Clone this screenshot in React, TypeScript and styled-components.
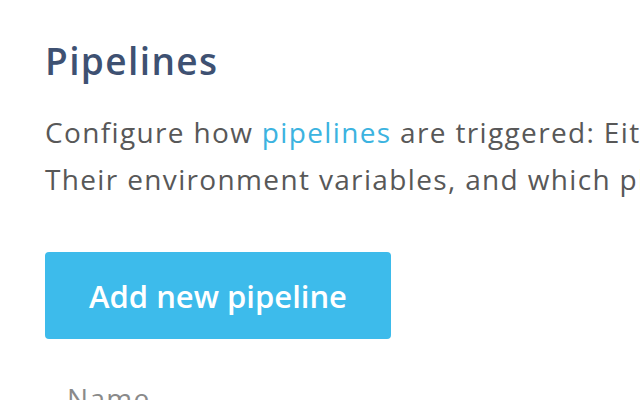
import styled, { createGlobalStyle } from "styled-components";

const GlobalStyle = createGlobalStyle`
    html, body {
        margin: 0;
        padding: 0;
        background: #ffffff;
        overflow: hidden;
    }
    body {
        font-family: "Open Sans", "Noto Sans", sans-serif;
    }
`

const Page = styled.div`
    width: 640px;
    height: 400px;
    padding: 36px 0 0 45px;
    box-sizing: border-box;
    overflow: hidden;
`

const Title = styled.h1`
    margin: 0;
    font-size: 37px;
    font-weight: 600;
    line-height: 50px;
    letter-spacing: 1.4px;
    color: #3e5172;
`

const Intro = styled.p`
    margin: 23px 0 0;
    font-size: 28px;
    line-height: 47px;
    letter-spacing: 1.35px;
    color: #585858;
    white-space: nowrap;
`

const Link = styled.a`
    color: #3cb3e0;
    text-decoration: none;
`

const AddButton = styled.button`
    display: block;
    margin-top: 49px;
    width: 346px;
    height: 87px;
    padding: 0;
    border: none;
    border-radius: 4px;
    background: #3dbbeb;
    color: #ffffff;
    font-family: inherit;
    font-size: 31px;
    font-weight: 600;
    cursor: pointer;
`

const Table = styled.div`
    margin-top: 40px;
    padding-left: 22px;
`

const HeaderCell = styled.div`
    font-size: 28px;
    line-height: 38px;
    letter-spacing: 1.35px;
    color: #8a8a8a;
`

export default function App() {
    return (
        <Page>
            <GlobalStyle />
            <Title>Pipelines</Title>
            <Intro>
                Configure how <Link href="#">pipelines</Link> are triggered: Either manually or on a schedule.
                <br />
                Their environment variables, and which plugins they run.
            </Intro>
            <AddButton>Add new pipeline</AddButton>
            <Table>
                <HeaderCell>Name</HeaderCell>
            </Table>
        </Page>
    )
}
